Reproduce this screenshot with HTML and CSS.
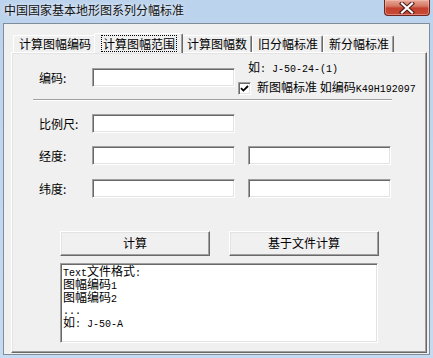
FILE: index.html
```html
<!DOCTYPE html>
<html lang="zh-CN">
<head>
<meta charset="utf-8">
<title>中国国家基本地形图系列分幅标准</title>
<link rel="stylesheet" href="styles.css">
</head>
<body>
<div class="window">
  <div class="titlebar">
    <span class="title">中国国家基本地形图系列分幅标准</span>
    <span class="close">
      <svg class="close-x" width="16" height="12" viewBox="0 0 16 12">
        <path d="M3 1.5 L13 10.5 M13 1.5 L3 10.5" stroke="#4b1a16" stroke-width="4.2" stroke-linecap="square" fill="none"/>
        <path d="M3 1.5 L13 10.5 M13 1.5 L3 10.5" stroke="#ffffff" stroke-width="2.2" stroke-linecap="square" fill="none"/>
      </svg>
    </span>
  </div>
  <div class="client">
    <div class="tabs">
      <span class="tab">计算图幅编码</span>
      <span class="tab active"><span class="focus">计算图幅范围</span></span>
      <span class="tab">计算图幅数</span>
      <span class="tab">旧分幅标准</span>
      <span class="tab">新分幅标准</span>
    </div>
    <div class="panel">
      <div class="row-code">
        <span class="lbl">编码:</span>
        <span class="input"></span>
        <div class="hint">
          <div class="hint-line">如<span class="mono">: J-50-24-(1)</span></div>
          <div class="check-line">
            <span class="checkbox">
              <svg width="9" height="9" viewBox="0 0 9 9"><path d="M1 4.2 L3.4 6.6 L8 2" stroke="#000" stroke-width="1.8" fill="none"/></svg>
            </span>
            <span class="check-text">新图幅标准 如编码<span class="mono">K49H192097</span></span>
          </div>
        </div>
      </div>
      <div class="sep"></div>
      <div class="form-row row-scale">
        <span class="lbl">比例尺:</span>
        <span class="input"></span>
      </div>
      <div class="form-row row-lon">
        <span class="lbl">经度:</span>
        <span class="input"></span>
        <span class="input"></span>
      </div>
      <div class="form-row row-lat">
        <span class="lbl">纬度:</span>
        <span class="input"></span>
        <span class="input"></span>
      </div>
      <div class="buttons">
        <span class="btn">计算</span>
        <span class="btn">基于文件计算</span>
      </div>
      <div class="textarea">
        <div class="ta-line"><span class="mono">Text</span>文件格式<span class="mono">:</span></div>
        <div class="ta-line">图幅编码<span class="mono">1</span></div>
        <div class="ta-line">图幅编码<span class="mono">2</span></div>
        <div class="ta-line"><span class="mono">...</span></div>
        <div class="ta-line">如<span class="mono">: J-50-A</span></div>
      </div>
    </div>
  </div>
</div>
</body>
</html>
```

FILE: styles.css
```css
* { box-sizing: border-box; }
html, body { margin: 0; padding: 0; }
body {
  width: 433px;
  height: 358px;
  overflow: hidden;
  background: linear-gradient(#bcd3ed, #c6daf1);
  font-family: "Noto Sans CJK SC", "Noto Sans", sans-serif;
  font-size: 12px;
  color: #000;
}
.window { display: flex; flex-direction: column; height: 358px; }

.titlebar {
  height: 23px;
  display: flex;
  justify-content: space-between;
  align-items: flex-start;
}
.title {
  padding: 3px 0 0 4px;
  line-height: 14px;
  font-size: 12px;
  color: #111;
  text-shadow: 0 0 4px rgba(255,255,255,0.9);
}
.close {
  width: 46px;
  height: 16px;
  margin-right: 3px;
  border: 1px solid #6d2520;
  border-top: none;
  border-radius: 0 0 4px 4px;
  background: linear-gradient(#e7a898 0%, #d57a66 40%, #c3402d 55%, #c64d38 100%);
  box-shadow: inset 0 0 0 1px rgba(255,200,190,0.45);
  display: flex;
  align-items: center;
  justify-content: center;
}
.close-x { display: block; }

.client {
  flex: 1;
  margin: 0 3px 3px 3px;
  background: #f0f0f0;
  border: 1px solid #7f8c99;
  padding: 9px 2px 1px 7px;
  display: flex;
  flex-direction: column;
}

.tabs {
  display: flex;
  align-items: flex-end;
  height: 19px;
  padding-left: 2px;
  position: relative;
  z-index: 2;
}
.tab {
  height: 17px;
  line-height: 16px;
  padding: 0 4px 0 5px;
  border-top: 1px solid #fff;
  border-left: 1px solid #fff;
  border-right: 1px solid #696969;
  border-radius: 2px 2px 0 0;
  box-shadow: inset -1px 0 0 #a0a0a0;
  background: #f0f0f0;
  white-space: nowrap;
}
.tab.active {
  height: 20px;
  margin: 0 -2px -1px -2px;
  padding: 1px 5px 0 6px;
  position: relative;
  z-index: 3;
  line-height: 15px;
}
.focus {
  display: inline-block;
  border: 1px dotted #000;
  padding: 0 1px;
  line-height: 15px;
}

.panel {
  flex: 1;
  border: 1px solid;
  border-color: #fff #696969 #696969 #fff;
  box-shadow: inset -1px -1px 0 #a0a0a0, inset 1px 1px 0 #e3e3e3;
  background: #f0f0f0;
  display: flex;
  flex-direction: column;
  align-items: flex-start;
}

.lbl {
  width: 53px;
  height: 19px;
  line-height: 19px;
  flex: none;
}
.input {
  width: 143px;
  height: 19px;
  flex: none;
  background: #fff;
  border: 1px solid;
  border-color: #a0a0a0 #fff #fff #a0a0a0;
  box-shadow: inset 1px 1px 0 #696969, inset -1px -1px 0 #e3e3e3;
}

.row-code {
  display: flex;
  align-items: flex-start;
  margin-top: 7px;
  padding-left: 27px;
  height: 35px;
}
.row-code .lbl, .row-code .input { margin-top: 8px; }
.hint { margin-left: 3px; }
.hint-line {
  padding-left: 10px;
  height: 14px;
  line-height: 14px;
  white-space: nowrap;
}
.check-line {
  margin-top: 7px;
  height: 14px;
  display: flex;
  align-items: center;
  white-space: nowrap;
}
.checkbox {
  width: 13px;
  height: 13px;
  flex: none;
  background: #fff;
  border: 1px solid;
  border-color: #a0a0a0 #fff #fff #a0a0a0;
  box-shadow: inset 1px 1px 0 #696969, inset -1px -1px 0 #e3e3e3;
  display: flex;
  align-items: center;
  justify-content: center;
}
.checkbox svg { display: block; }
.check-text { margin-left: 6px; line-height: 14px; }

.mono {
  font-family: "Liberation Mono", "DejaVu Sans Mono", monospace;
  font-size: 10px;
}

.sep {
  margin: 4px 0 0 21px;
  width: 359px;
  height: 2px;
  border-top: 1px solid #a0a0a0;
  border-bottom: 1px solid #fff;
}

.form-row {
  display: flex;
  gap: 13px;
  padding-left: 27px;
}
.form-row .lbl { margin-right: -13px; }
.row-scale { margin-top: 13px; }
.row-lon { margin-top: 13px; }
.row-lat { margin-top: 14px; }

.buttons {
  display: flex;
  gap: 19px;
  margin: 33px 0 0 48px;
}
.btn {
  width: 150px;
  height: 25px;
  line-height: 22px;
  text-align: center;
  background: #f0f0f0;
  border: 1px solid;
  border-color: #fff #696969 #696969 #fff;
  box-shadow: inset -1px -1px 0 #a0a0a0, inset 1px 1px 0 #e3e3e3;
}

.textarea {
  margin: 7px 0 0 48px;
  width: 318px;
  height: 80px;
  background: #fff;
  border: 1px solid;
  border-color: #a0a0a0 #fff #fff #a0a0a0;
  box-shadow: inset 1px 1px 0 #696969, inset -1px -1px 0 #e3e3e3;
  padding: 1px 2px;
}
.ta-line {
  height: 12.75px;
  line-height: 12px;
  white-space: nowrap;
}
```
